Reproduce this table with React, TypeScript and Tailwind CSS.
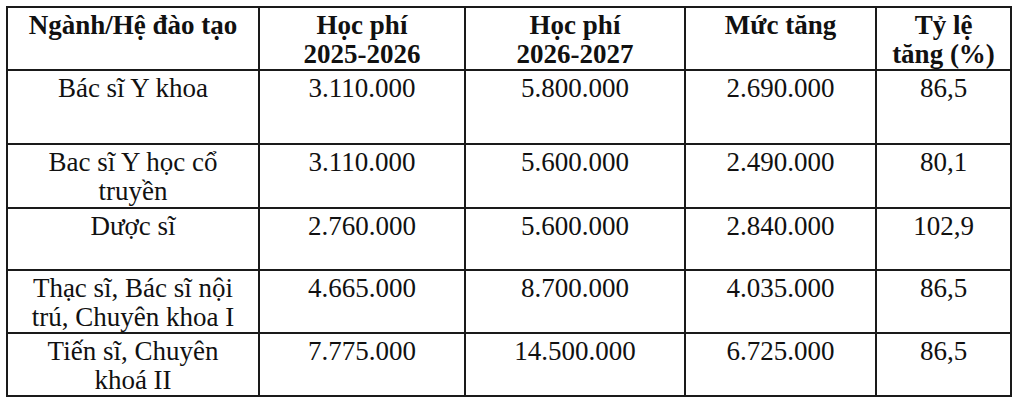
import React from "react";

const rows: { name: React.ReactNode; a: string; b: string; c: string; d: string; h: string }[] = [
  { name: "Bác sĩ Y khoa", a: "3.110.000", b: "5.800.000", c: "2.690.000", d: "86,5", h: "h-[74px]" },
  { name: <>Bac sĩ Y học cổ<br />truyền</>, a: "3.110.000", b: "5.600.000", c: "2.490.000", d: "80,1", h: "h-[64px]" },
  { name: "Dược sĩ", a: "2.760.000", b: "5.600.000", c: "2.840.000", d: "102,9", h: "h-[62px]" },
  { name: <>Thạc sĩ, Bác sĩ nội<br />trú, Chuyên khoa I</>, a: "4.665.000", b: "8.700.000", c: "4.035.000", d: "86,5", h: "h-[63px]" },
  { name: <>Tiến sĩ, Chuyên<br />khoá II</>, a: "7.775.000", b: "14.500.000", c: "6.725.000", d: "86,5", h: "h-[62px]" },
];

const td = "border-2 border-[#1a1a1a] align-top text-center px-1 pt-[3px] pb-0";

export default function App() {
  return (
    <div className="w-[1020px] h-[402px] bg-white pt-[6px] pl-[6px]" style={{ fontFamily: '"Liberation Serif", "Times New Roman", serif' }}>
      <table className="table-fixed border-collapse w-[1006px] text-[27px] leading-[29px] text-[#111]">
        <colgroup>
          <col className="w-[252px]" />
          <col className="w-[206px]" />
          <col className="w-[220px]" />
          <col className="w-[191px]" />
          <col className="w-[135px]" />
        </colgroup>
        <thead>
          <tr>
            <th className={`${td} h-[62px] font-bold pt-[1px]`}>Ngành/Hệ đào tạo</th>
            <th className={`${td} h-[62px] font-bold pt-[1px]`}>Học phí<br />2025-2026</th>
            <th className={`${td} h-[62px] font-bold pt-[1px]`}>Học phí<br />2026-2027</th>
            <th className={`${td} h-[62px] font-bold pt-[1px]`}>Mức tăng</th>
            <th className={`${td} h-[62px] font-bold pt-[1px]`}>Tỷ lệ<br />tăng (%)</th>
          </tr>
        </thead>
        <tbody>
          {rows.map((r, i) => (
            <tr key={i}>
              <td className={`${td} ${r.h}`}>{r.name}</td>
              <td className={`${td} ${r.h}`}>{r.a}</td>
              <td className={`${td} ${r.h}`}>{r.b}</td>
              <td className={`${td} ${r.h}`}>{r.c}</td>
              <td className={`${td} ${r.h}`}>{r.d}</td>
            </tr>
          ))}
        </tbody>
      </table>
    </div>
  );
}
